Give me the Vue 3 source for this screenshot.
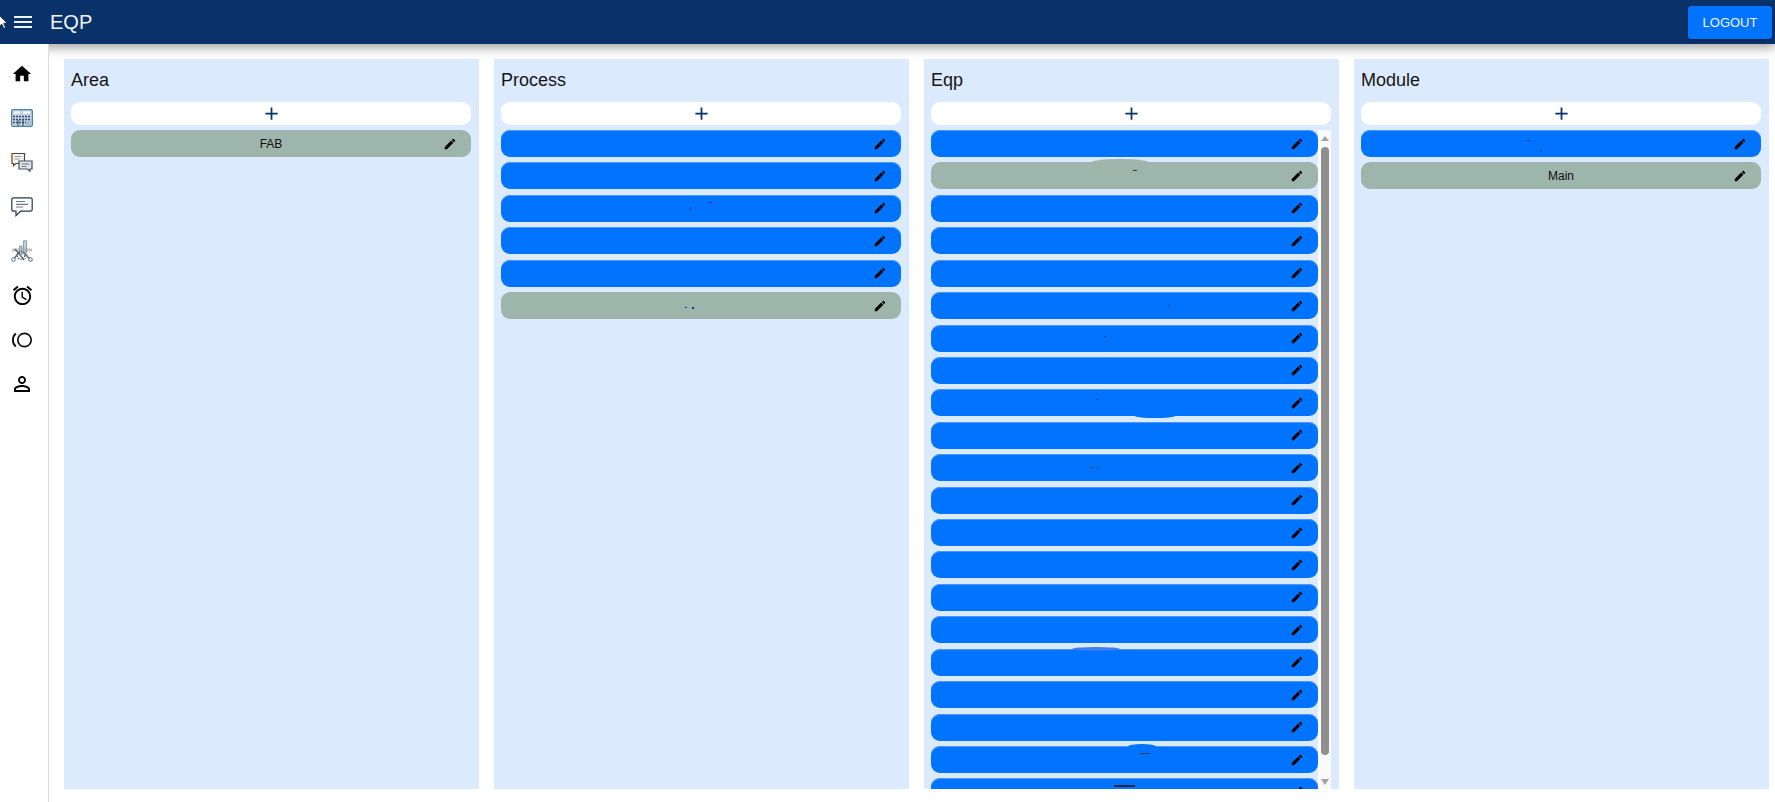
<script setup>
const blue = (marks = []) => ({ gray: false, text: '', marks })
const gray = (text = '', marks = []) => ({ gray: true, text, marks })

// little leftovers of the blurred labels, x/y are relative to the row
const dark = (x, y, w = 2, h = 1) => ({ x, y, w, h, color: '#17406f', radius: '0' })
const bulge = (x, y, w, h, color) => ({ x, y, w, h, color, radius: '50%' })

const eqpRows = Array.from({ length: 21 }, () => blue())
eqpRows[1] = gray('', [bulge(159, -3, 60, 8, '#9db5ab'), dark(202, 8, 4, 1)])
eqpRows[5].marks = [dark(237, 13)]
eqpRows[6].marks = [dark(173, 11)]
eqpRows[8].marks = [dark(165, 10), bulge(204, 25, 40, 4, '#0074ff')]
eqpRows[10].marks = [dark(160, 13, 3), dark(166, 13)]
eqpRows[16].marks = [bulge(141, -2, 48, 4, '#3d7ef0')]
eqpRows[19].marks = [bulge(197, -2, 28, 5, '#0074ff'), dark(209, 7, 10, 1)]
eqpRows[20].marks = [{ x: 183, y: 7, w: 21, h: 2, color: '#10263f', radius: '0' }]

const processRows = [
  blue(),
  blue(),
  blue([dark(189, 12, 1, 3), dark(207, 7, 4, 1)]),
  blue(),
  blue(),
  gray('', [dark(184, 15, 2, 1), dark(191, 15, 2, 2)])
]

const panels = [
  { title: 'Area', rows: [gray('FAB')] },
  { title: 'Process', rows: processRows },
  { title: 'Eqp', rows: eqpRows, scroll: true },
  { title: 'Module', rows: [blue([dark(166, 10, 3, 1), dark(179, 20, 2, 1)]), gray('Main')] }
]
</script>

<template>
  <div class="page">
    <header class="topbar">
      <svg class="cursor" viewBox="0 0 8 14" width="8" height="14">
        <path d="M-1 0 L7 8 L3.6 8.4 L5.6 12.6 L3.8 13.4 L1.8 9.2 L-1 11.6 Z" fill="#fff" stroke="#111" stroke-width=".7" />
      </svg>
      <svg class="menu" viewBox="0 0 24 24" width="24" height="24">
        <path d="M3 18h18v-2H3v2zm0-5h18v-2H3v2zm0-7v2h18V6H3z" fill="#eef3f9" />
      </svg>
      <span class="brand">EQP</span>
      <button class="logout">LOGOUT</button>
    </header>

    <div class="body">
      <nav class="sidebar">
        <div class="nav-item">
          <svg viewBox="0 0 24 24" width="22" height="22"><path d="M10 20v-6h4v6h5v-8h3L12 3 2 12h3v8z" fill="#000" /></svg>
        </div>
        <div class="nav-item">
          <svg viewBox="0 0 22 18" width="22" height="18">
            <rect x=".6" y=".6" width="20.8" height="16.8" rx="1.5" fill="#c3d1df" stroke="#4f81ad" stroke-width="1.2" />
            <path d="M3 3.5h6M12 3.5h7" stroke="#fff" stroke-width="2" />
            <path d="M2 7.5h18M2 10.500h18M2 13.500h18" stroke="#2f4d6c" stroke-width="1.4" stroke-dasharray="2 1" />
            <path d="M15 12h5v4h-5z" fill="#a9bfd4" />
            <path d="M7 11v6M12 11v6" stroke="#2f4d6c" stroke-width="1" />
          </svg>
        </div>
        <div class="nav-item">
          <svg viewBox="0 0 22 20" width="22" height="20">
            <path d="M1 1.500h12.500v10H5l-2.500 2.200v-2.200H1z" fill="#f4f4f4" stroke="#4d4436" stroke-width="1.200" />
            <path d="M1 1.500V11" stroke="#c9853f" stroke-width="1" />
            <path d="M3.500 4.500h7M3.500 7h5" stroke="#8d99a6" stroke-width="1.200" />
            <path d="M8 9h13v8h-2v2.200L16.500 17H8z" fill="#e4e8ec" stroke="#3f5063" stroke-width="1.200" />
            <path d="M10.500 12h8M10.500 14.500h5" stroke="#6c7681" stroke-width="1.200" />
          </svg>
        </div>
        <div class="nav-item">
          <svg viewBox="0 0 22 20" width="22" height="20">
            <path d="M2.500 .8h17a1.700 1.700 0 0 1 1.700 1.700v10a1.700 1.700 0 0 1-1.700 1.700H9.500L5 18.600v-4.400H2.500A1.700 1.700 0 0 1 .8 12.500v-10A1.700 1.700 0 0 1 2.500 .8z" fill="#fff" stroke="#27384a" stroke-width="1.200" />
            <path d="M5 4.500h9M5 7.300h12M5 10h7" stroke="#6d7680" stroke-width="1.200" />
          </svg>
        </div>
        <div class="nav-item">
          <svg viewBox="0 0 22 22" width="22" height="22">
            <path d="M8.500 6h2.500v8H8.500zM12.500 .8h3V13h-3z" fill="#c4d2e0" stroke="#6f8aa6" stroke-width=".8" />
            <path d="M1 8.500h20v3H1z" fill="#a4a4a4" opacity=".65" />
            <path d="M2.500 19.500 L8 12 M19.500 19.500 L13 13 M4 9 L13 20" stroke="#5d6873" stroke-width="1.300" />
            <circle cx="10" cy="15.500" r="3.800" fill="none" stroke="#46525e" stroke-width="1.200" stroke-dasharray="1.500 1" />
            <circle cx="13.500" cy="16" r="2.800" fill="none" stroke="#6a7480" stroke-width="1" stroke-dasharray="1.500 1" />
            <circle cx="2.500" cy="19.500" r="1.800" fill="#fff" stroke="#4f7395" />
            <circle cx="19.500" cy="19.500" r="1.800" fill="#fff" stroke="#56616d" />
          </svg>
        </div>
        <div class="nav-item">
          <svg viewBox="0 0 24 24" width="23" height="23"><path d="M22 5.720l-4.600-3.860-1.290 1.530 4.600 3.860L22 5.720zM7.880 3.390L6.600 1.860 2 5.710l1.290 1.530 4.590-3.850zM12.500 8H11v6l4.750 2.850.75-1.230-4-2.370V8zM12 4c-4.970 0-9 4.030-9 9s4.020 9 9 9c4.970 0 9-4.030 9-9s-4.030-9-9-9zm0 16c-3.870 0-7-3.130-7-7s3.130-7 7-7 7 3.130 7 7-3.130 7-7 7z" fill="#000" /></svg>
        </div>
        <div class="nav-item">
          <svg viewBox="0 0 22 16" width="22" height="16">
            <circle cx="13.500" cy="8" r="6.700" fill="none" stroke="#111" stroke-width="1.700" />
            <path d="M4.800 1.500C.9 4.800.9 11.200 4.800 14.500" fill="none" stroke="#111" stroke-width="1.900" />
          </svg>
        </div>
        <div class="nav-item">
          <svg viewBox="0 0 24 24" width="24" height="24"><path d="M12 5.900c1.160 0 2.100.94 2.100 2.100s-.94 2.100-2.100 2.100S9.900 9.160 9.900 8s.94-2.100 2.100-2.100m0 9c2.970 0 6.100 1.460 6.100 2.100v1.100H5.900V17c0-.64 3.130-2.100 6.100-2.100M12 4C9.790 4 8 5.790 8 8s1.790 4 4 4 4-1.790 4-4-1.790-4-4-4zm0 9c-2.670 0-8 1.340-8 4v3h16v-3c0-2.660-5.330-4-8-4z" fill="#000" /></svg>
        </div>
      </nav>

      <main class="board">
        <section v-for="panel in panels" :key="panel.title" class="panel">
          <h2 class="panel-title">{{ panel.title }}</h2>
          <button class="add">
            <svg viewBox="0 0 24 24" width="21" height="21"><path d="M19 13h-6v6h-2v-6H5v-2h6V5h2v6h6v2z" fill="#0a3069" /></svg>
          </button>
          <div class="list-wrap">
            <div class="list">
              <div
                v-for="(row, i) in panel.rows"
                :key="i"
                class="row"
                :class="{ 'row-gray': row.gray }"
              >
                <span
                  v-for="(m, j) in row.marks"
                  :key="j"
                  class="mark"
                  :style="{ left: m.x + 'px', top: m.y + 'px', width: m.w + 'px', height: m.h + 'px', background: m.color, borderRadius: m.radius }"
                ></span>
                <span class="row-text">{{ row.text }}</span>
                <svg class="pencil" viewBox="0 0 24 24" width="14" height="14">
                  <path d="M3 17.250V21h3.750L17.810 9.940l-3.750-3.750L3 17.250zM20.710 7.040c.39-.39.39-1.020 0-1.410l-2.340-2.340c-.39-.39-1.020-.39-1.410 0l-1.830 1.830 3.750 3.750 1.830-1.830z" fill="#000" />
                </svg>
              </div>
            </div>
            <div v-if="panel.scroll" class="scrollbar">
              <span class="arrow arrow-up"></span>
              <span class="thumb"></span>
              <span class="arrow arrow-down"></span>
            </div>
          </div>
        </section>
      </main>
    </div>
  </div>
</template>

<style>
html,
body {
  margin: 0;
  overflow: hidden;
  background: #fff;
}
</style>

<style scoped>
.page {
  height: 100vh;
  display: flex;
  flex-direction: column;
  font-family: "Liberation Sans", Arial, sans-serif;
  color: #111;
}

.topbar {
  height: 44px;
  flex: none;
  display: flex;
  align-items: center;
  padding-left: 11px;
  padding-right: 3px;
  background: #0a326a;
  box-shadow: 0 4px 10px rgba(0, 0, 0, 0.35);
  position: relative;
  z-index: 1;
}

.cursor {
  position: absolute;
  left: 0;
  top: 15px;
}

.menu {
  flex: none;
}

.brand {
  margin-left: 15px;
  font-size: 20px;
  color: #f1f5fa;
}

.logout {
  margin-left: auto;
  width: 84px;
  height: 33px;
  border: none;
  border-radius: 3px;
  background: #0074ff;
  color: #eef5ff;
  font-family: inherit;
  font-size: 13px;
  padding: 0;
  box-shadow: 0 1px 3px rgba(0, 0, 0, 0.35);
}

.body {
  flex: 1;
  min-height: 0;
  display: flex;
}

.sidebar {
  width: 48px;
  flex: none;
  padding-top: 7.5px;
  background: #fff;
  border-right: 1px solid #dcdcdc;
  position: relative;
  z-index: 2;
}

.nav-item {
  height: 44.4px;
  width: 44px;
  display: flex;
  align-items: center;
  justify-content: center;
}

.board {
  flex: 1;
  min-width: 0;
  display: flex;
  gap: 15px;
  padding: 15px 6px 13px 15px;
}

.panel {
  flex: 1;
  min-width: 0;
  display: flex;
  flex-direction: column;
  padding: 0 8px 0 7px;
  background: #dceafe;
}

.panel-title {
  margin: 0;
  height: 43px;
  line-height: 43px;
  font-size: 18px;
  font-weight: 400;
  color: #151515;
}

.add {
  flex: none;
  height: 23px;
  padding: 0;
  border: none;
  border-radius: 9px;
  background: #fff;
  display: flex;
  align-items: center;
  justify-content: center;
}

.list-wrap {
  flex: 1;
  min-height: 0;
  margin-top: 5px;
  display: flex;
  overflow: hidden;
}

.list {
  flex: 1;
  min-width: 0;
  display: flex;
  flex-direction: column;
  gap: 5.43px;
}

.row {
  flex: none;
  height: 27px;
  box-sizing: border-box;
  display: grid;
  grid-template-columns: 40px 1fr 40px;
  align-items: center;
  position: relative;
  border-radius: 9px;
  background: #0074ff;
  box-shadow: inset 0 1px 0 #4b97ff;
}

.row-gray {
  background: #9db5ab;
  box-shadow: none;
}

.row-text {
  grid-column: 2;
  text-align: center;
  font-size: 12px;
  color: #111;
}

.pencil {
  grid-column: 3;
  justify-self: center;
  margin-left: -2px;
}

.mark {
  position: absolute;
}

.scrollbar {
  width: 13px;
  flex: none;
  box-sizing: border-box;
  padding: 6px 0 4px;
  display: flex;
  flex-direction: column;
  align-items: center;
  justify-content: space-between;
  background: #fafafa;
}

.thumb {
  width: 8px;
  flex: 1;
  margin: 6px 0 24px;
  border-radius: 4px;
  background: #8f8f8f;
}

.arrow {
  width: 0;
  height: 0;
  border-left: 4px solid transparent;
  border-right: 4px solid transparent;
}

.arrow-up {
  border-bottom: 5px solid #a3a3a3;
}

.arrow-down {
  border-top: 6px solid #a3a3a3;
}
</style>
